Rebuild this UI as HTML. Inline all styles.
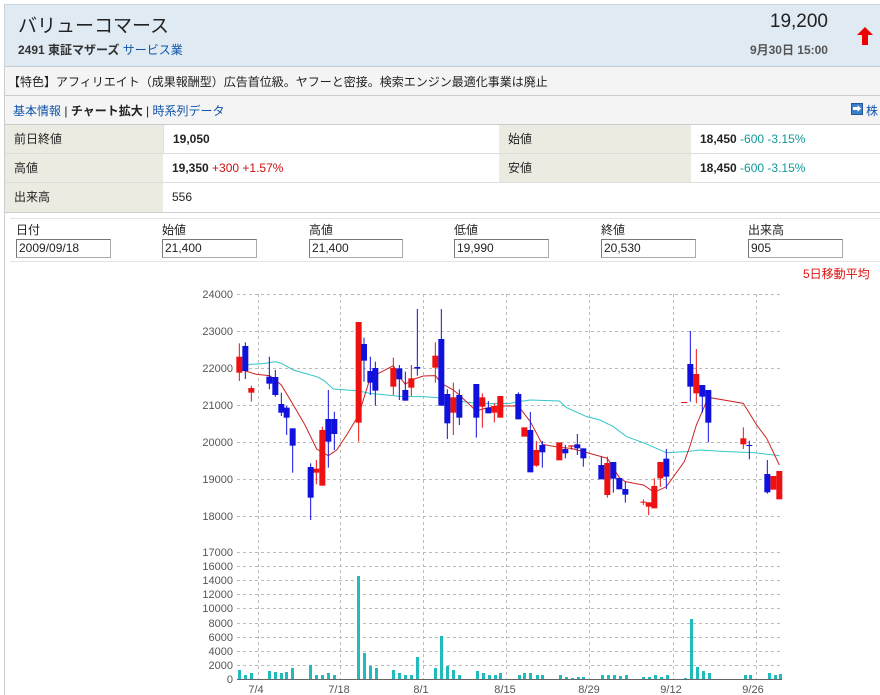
<!DOCTYPE html>
<html><head><meta charset="utf-8">
<style>
*{margin:0;padding:0;box-sizing:border-box}
body{width:880px;height:695px;overflow:hidden;background:#fff;font-family:"Liberation Sans","Noto Sans CJK JP",sans-serif;font-size:12px;color:#222;position:relative}
.a{position:absolute;white-space:nowrap}
.hdr{left:4px;top:4px;width:876px;height:63px;background:#dfeaf3;border-top:1px solid #c9d3da;border-left:1px solid #c9d3da;border-bottom:1px solid #c3ccd2}
.row{left:4px;width:876px;background:#f4f4f4;border-left:1px solid #ccc;border-bottom:1px solid #ccc}
.lbl{background:#ecebe2}
.cell{position:absolute;height:29px;line-height:28px;padding-left:9px;border-bottom:1px solid #ddd;font-size:12px}
.inp{position:absolute;height:19px;border:1px solid #aaa;border-top-color:#777;border-left-color:#777;background:#fff;font-size:12px;line-height:17px;padding-left:2px}
a,.lk{color:#1155aa}
</style></head><body>
<div class="a hdr"></div>
<div class="a" style="left:18px;top:11px;font-size:19px;color:#222">バリューコマース</div>
<div class="a" style="right:52px;top:11px;font-size:19px;color:#222">19,200</div>
<svg class="a" style="left:856px;top:26px" width="18" height="20" viewBox="0 0 18 20"><path d="M9 1 L17 9 L12 9 L12 19 L6 19 L6 9 L1 9Z" fill="#e00"/></svg>
<div class="a" style="left:18px;top:41px;font-size:12px;font-weight:bold;color:#333">2491 東証マザーズ <span class="lk" style="font-weight:normal">サービス業</span></div>
<div class="a" style="right:52px;top:41px;font-size:12px;font-weight:bold;color:#555">9月30日 15:00</div>
<div class="a row" style="top:67px;height:29px"></div>
<div class="a" style="left:8px;top:73px;font-size:12px">【特色】アフィリエイト（成果報酬型）広告首位級。ヤフーと密接。検索エンジン最適化事業は廃止</div>
<div class="a row" style="top:96px;height:29px"></div>
<div class="a" style="left:13px;top:102px;font-size:12px"><span class="lk">基本情報</span> | <b>チャート拡大</b> | <span class="lk">時系列データ</span></div>
<div class="a" style="left:851px;top:103px;width:12px;height:12px;background:#3a7fc9;border:1px solid #25579a;color:#fff;font-size:9px;line-height:10px;text-align:center">➡</div>
<div class="a lk" style="left:866px;top:102px;font-size:12px">株</div>
<div class="a" style="left:4px;top:125px;width:876px;height:88px;border-left:1px solid #ccc;border-bottom:1px solid #ccc">
<div class="cell lbl" style="left:0;top:0;width:158px">前日終値</div>
<div class="cell" style="left:158px;top:0;width:336px;font-weight:bold;border-left:1px solid #ddd">19,050</div>
<div class="cell lbl" style="left:494px;top:0;width:192px">始値</div>
<div class="cell" style="left:686px;top:0;width:190px"><b>18,450</b> <span style="color:#199">-600 -3.15%</span></div>
<div class="cell lbl" style="left:0;top:29px;width:158px">高値</div>
<div class="cell" style="left:158px;top:29px;width:336px"><b>19,350</b> <span style="color:#c11">+300 +1.57%</span></div>
<div class="cell lbl" style="left:494px;top:29px;width:192px">安値</div>
<div class="cell" style="left:686px;top:29px;width:190px"><b>18,450</b> <span style="color:#199">-600 -3.15%</span></div>
<div class="cell lbl" style="left:0;top:58px;width:158px;border-bottom:none">出来高</div>
<div class="cell" style="left:158px;top:58px;width:718px;border-bottom:none">556</div>
</div>
<div class="a" style="left:4px;top:213px;width:1px;height:482px;background:#ccc"></div>
<div class="a" style="left:10px;top:218px;width:870px;height:44px;border-top:1px solid #e4e4e4;border-bottom:1px solid #e4e4e4"></div>
<div class="a" style="left:16px;top:221px">日付</div><div class="a" style="left:162px;top:221px">始値</div><div class="a" style="left:309px;top:221px">高値</div><div class="a" style="left:454px;top:221px">低値</div><div class="a" style="left:601px;top:221px">終値</div><div class="a" style="left:748px;top:221px">出来高</div>
<div class="inp" style="left:16px;top:239px;width:95px">2009/09/18</div>
<div class="inp" style="left:162px;top:239px;width:95px">21,400</div>
<div class="inp" style="left:309px;top:239px;width:94px">21,400</div>
<div class="inp" style="left:454px;top:239px;width:95px">19,990</div>
<div class="inp" style="left:601px;top:239px;width:95px">20,530</div>
<div class="inp" style="left:748px;top:239px;width:95px">905</div>
<div class="a" style="left:803px;top:265px;color:#d11;font-size:12px">5日移動平均</div>
<svg class="a" style="left:0;top:0" width="880" height="695">
<g stroke="#bbb" stroke-width="1" stroke-dasharray="3,3" fill="none">
<path d="M237 294.5H780M237 331.5H780M237 368.5H780M237 405.5H780M237 442.5H780M237 479.5H780M237 516.5H780M237 552.5H780"/>
<path d="M237 566.5H780M237 580.5H780M237 594.5H780M237 608.5H780M237 623.5H780M237 637.5H780M237 651.5H780M237 665.5H780"/>
<path d="M258.5 294V679M340.5 294V679M423.5 294V679M506.5 294V679M589.5 294V679M673.5 294V679M756.5 294V679"/>
</g>
<path d="M237 679.5H782" stroke="#666" stroke-width="1"/>
<g font-family="Liberation Sans,sans-serif" font-size="11" fill="#555" text-anchor="end">
<text x="233" y="298">24000</text><text x="233" y="335">23000</text><text x="233" y="372">22000</text><text x="233" y="409">21000</text><text x="233" y="446">20000</text><text x="233" y="483">19000</text><text x="233" y="520">18000</text><text x="233" y="556">17000</text>
<text x="233" y="570">16000</text><text x="233" y="584">14000</text><text x="233" y="598">12000</text><text x="233" y="612">10000</text><text x="233" y="627">8000</text><text x="233" y="641">6000</text><text x="233" y="655">4000</text><text x="233" y="669">2000</text><text x="233" y="683">0</text>
</g>
<g font-family="Liberation Sans,sans-serif" font-size="11" fill="#555" text-anchor="middle">
<text x="256" y="693">7/4</text><text x="339" y="693">7/18</text><text x="421" y="693">8/1</text><text x="505" y="693">8/15</text><text x="589" y="693">8/29</text><text x="671" y="693">9/12</text><text x="753" y="693">9/26</text>
</g>
<g fill="#22bbbb">
<rect x="238" y="670" width="3" height="9"/><rect x="244" y="675" width="3" height="4"/><rect x="250" y="673" width="3" height="6"/>
<rect x="268" y="671" width="3" height="8"/><rect x="274" y="672" width="3" height="7"/><rect x="280" y="673" width="3" height="6"/><rect x="285" y="672" width="3" height="7"/><rect x="291" y="668" width="3" height="11"/>
<rect x="309" y="665" width="3" height="14"/><rect x="315" y="675" width="3" height="4"/><rect x="321" y="675" width="3" height="4"/><rect x="327" y="673" width="3" height="6"/><rect x="333" y="675" width="3" height="4"/>
<rect x="357" y="576" width="3" height="103"/><rect x="363" y="653" width="3" height="26"/><rect x="369" y="666" width="3" height="13"/><rect x="375" y="668" width="3" height="11"/>
<rect x="392" y="670" width="3" height="9"/><rect x="398" y="673" width="3" height="6"/><rect x="404" y="675" width="3" height="4"/><rect x="410" y="675" width="3" height="4"/><rect x="416" y="657" width="3" height="22"/>
<rect x="434" y="668" width="3" height="11"/><rect x="440" y="636" width="3" height="43"/><rect x="446" y="666" width="3" height="13"/><rect x="452" y="670" width="3" height="9"/><rect x="458" y="675" width="3" height="4"/>
<rect x="476" y="671" width="3" height="8"/><rect x="482" y="673" width="3" height="6"/><rect x="488" y="675" width="3" height="4"/><rect x="494" y="675" width="3" height="4"/><rect x="499" y="673" width="3" height="6"/>
<rect x="518" y="675" width="3" height="4"/><rect x="523" y="673" width="3" height="6"/><rect x="529" y="673" width="3" height="6"/><rect x="536" y="675" width="3" height="4"/><rect x="541" y="675" width="3" height="4"/>
<rect x="559" y="675" width="3" height="4"/><rect x="565" y="677" width="3" height="2"/><rect x="571" y="678" width="3" height="1"/><rect x="577" y="677" width="3" height="2"/><rect x="582" y="677" width="3" height="2"/>
<rect x="601" y="675" width="3" height="4"/><rect x="607" y="675" width="3" height="4"/><rect x="613" y="675" width="3" height="4"/><rect x="619" y="676" width="3" height="3"/><rect x="625" y="675" width="3" height="4"/>
<rect x="642" y="677" width="3" height="2"/><rect x="648" y="677" width="3" height="2"/><rect x="654" y="675" width="3" height="4"/><rect x="660" y="677" width="3" height="2"/><rect x="666" y="675" width="3" height="4"/>
<rect x="684" y="678" width="3" height="1"/><rect x="690" y="619" width="3" height="60"/><rect x="696" y="667" width="3" height="12"/><rect x="702" y="671" width="3" height="8"/><rect x="708" y="673" width="3" height="6"/>
<rect x="744" y="675" width="3" height="4"/><rect x="749" y="675" width="3" height="4"/><rect x="768" y="673" width="3" height="6"/><rect x="774" y="675" width="3" height="4"/><rect x="779" y="674" width="3" height="5"/>
</g>
<g transform="translate(190,285) scale(0.33333)">
<polyline fill="none" stroke="#33c6c6" stroke-width="3" points="148,250 180,238 220,236 256,230 274,235 310,255 345,265 380,275 400,285 430,312 470,315 506,318 540,325 590,330 640,335 700,335 740,338 790,343 820,350 860,355 900,356 960,355 985,350 1021,345 1108,348 1130,368 1190,395 1230,405 1270,425 1310,455 1360,473 1429,503 1490,500 1530,495 1610,500 1690,503 1768,512"/>
<polyline fill="none" stroke="#cc2222" stroke-width="3" points="148,250 166,258 200,268 238,272 256,285 274,300 310,360 345,420 380,492 415,512 440,495 470,450 506,390 540,280 556,270 610,242 628,275 646,298 664,285 700,273 736,272 754,295 790,315 808,330 859,378 877,372 913,365 930,363 985,363 1021,410 1057,478 1108,487 1144,490 1180,500 1234,515 1252,520 1288,578 1306,590 1360,600 1393,622 1429,605 1483,530 1501,480 1519,420 1555,337 1660,355 1700,420 1730,460 1768,540"/>
<g fill="#ee1111">
<rect x="146.5" y="175" width="3" height="113"/><rect x="139" y="215" width="18" height="48"/>
<rect x="182.5" y="302" width="3" height="48"/><rect x="175" y="309" width="18" height="14"/>
<rect x="377.5" y="525" width="3" height="73"/><rect x="370" y="551" width="18" height="12"/>
<rect x="395.5" y="425" width="3" height="177"/><rect x="388" y="435" width="18" height="167"/>
<rect x="504.5" y="111" width="3" height="359"/><rect x="497" y="111" width="18" height="302"/>
<rect x="608.5" y="218" width="3" height="112"/><rect x="601" y="249" width="18" height="56"/>
<rect x="662.5" y="240" width="3" height="93"/><rect x="655" y="280" width="18" height="28"/>
<rect x="734.5" y="172" width="3" height="121"/><rect x="727" y="212" width="18" height="36"/>
<rect x="788.5" y="293" width="3" height="157"/><rect x="781" y="337" width="18" height="46"/>
<rect x="875.5" y="325" width="3" height="103"/><rect x="868" y="337" width="18" height="28"/>
<rect x="911.5" y="355" width="3" height="57"/><rect x="904" y="363" width="18" height="20"/>
<rect x="929.5" y="333" width="3" height="65"/><rect x="922" y="333" width="18" height="65"/>
<rect x="994" y="427" width="18" height="28"/>
<rect x="1037.5" y="468" width="3" height="77"/><rect x="1030" y="495" width="18" height="47"/>
<rect x="1099" y="472" width="18" height="54"/>
<rect x="1142.5" y="482" width="3" height="13"/><rect x="1135" y="481" width="18" height="4"/>
<rect x="1250.5" y="515" width="3" height="123"/><rect x="1243" y="534" width="18" height="96"/>
<rect x="1358.5" y="643" width="3" height="17"/><rect x="1351" y="650" width="18" height="3"/>
<rect x="1374.5" y="652" width="3" height="38"/><rect x="1367" y="652" width="18" height="13"/>
<rect x="1391.5" y="580" width="3" height="90"/><rect x="1384" y="603" width="18" height="67"/>
<rect x="1409.5" y="531" width="3" height="75"/><rect x="1402" y="531" width="18" height="49"/>
<rect x="1474" y="351" width="18" height="3"/>
<rect x="1517.5" y="192" width="3" height="163"/><rect x="1510" y="267" width="18" height="58"/>
<rect x="1658.5" y="427" width="3" height="65"/><rect x="1651" y="460" width="18" height="18"/>
<rect x="1741" y="573" width="18" height="41"/>
<rect x="1759" y="558" width="18" height="85"/>
</g>
<g fill="#1111dd">
<rect x="164.5" y="172" width="3" height="110"/><rect x="157" y="183" width="18" height="75"/>
<rect x="236.5" y="215" width="3" height="98"/><rect x="229" y="275" width="18" height="21"/>
<rect x="254.5" y="255" width="3" height="80"/><rect x="247" y="276" width="18" height="54"/>
<rect x="272.5" y="323" width="3" height="70"/><rect x="265" y="357" width="18" height="26"/>
<rect x="288.5" y="363" width="3" height="87"/><rect x="281" y="368" width="18" height="30"/>
<rect x="306.5" y="430" width="3" height="133"/><rect x="299" y="430" width="18" height="52"/>
<rect x="360.5" y="535" width="3" height="170"/><rect x="353" y="546" width="18" height="92"/>
<rect x="413.5" y="315" width="3" height="233"/><rect x="406" y="402" width="18" height="68"/>
<rect x="431.5" y="380" width="3" height="115"/><rect x="424" y="402" width="18" height="45"/>
<rect x="520.5" y="158" width="3" height="132"/><rect x="513" y="177" width="18" height="50"/>
<rect x="539.5" y="215" width="3" height="115"/><rect x="532" y="258" width="18" height="35"/>
<rect x="554.5" y="230" width="3" height="132"/><rect x="547" y="249" width="18" height="68"/>
<rect x="626.5" y="240" width="3" height="105"/><rect x="619" y="250" width="18" height="33"/>
<rect x="644.5" y="260" width="3" height="87"/><rect x="637" y="315" width="18" height="32"/>
<rect x="680.5" y="72" width="3" height="200"/><rect x="673" y="246" width="18" height="5"/>
<rect x="752.5" y="72" width="3" height="290"/><rect x="745" y="162" width="18" height="200"/>
<rect x="770.5" y="313" width="3" height="149"/><rect x="763" y="327" width="18" height="88"/>
<rect x="806.5" y="313" width="3" height="107"/><rect x="799" y="330" width="18" height="68"/>
<rect x="857.5" y="297" width="3" height="161"/><rect x="850" y="297" width="18" height="101"/>
<rect x="893.5" y="348" width="3" height="37"/><rect x="886" y="368" width="18" height="17"/>
<rect x="983.5" y="322" width="3" height="81"/><rect x="976" y="327" width="18" height="76"/>
<rect x="1019.5" y="381" width="3" height="181"/><rect x="1012" y="435" width="18" height="127"/>
<rect x="1055.5" y="468" width="3" height="80"/><rect x="1048" y="480" width="18" height="22"/>
<rect x="1124.5" y="480" width="3" height="40"/><rect x="1117" y="492" width="18" height="13"/>
<rect x="1160.5" y="447" width="3" height="63"/><rect x="1153" y="478" width="18" height="12"/>
<rect x="1178.5" y="490" width="3" height="55"/><rect x="1171" y="490" width="18" height="30"/>
<rect x="1232.5" y="515" width="3" height="68"/><rect x="1225" y="540" width="18" height="43"/>
<rect x="1268.5" y="531" width="3" height="92"/><rect x="1261" y="531" width="18" height="50"/>
<rect x="1286.5" y="579" width="3" height="34"/><rect x="1279" y="579" width="18" height="34"/>
<rect x="1304.5" y="590" width="3" height="63"/><rect x="1297" y="612" width="18" height="17"/>
<rect x="1427.5" y="492" width="3" height="120"/><rect x="1420" y="521" width="18" height="54"/>
<rect x="1499.5" y="138" width="3" height="212"/><rect x="1492" y="237" width="18" height="68"/>
<rect x="1535.5" y="300" width="3" height="83"/><rect x="1528" y="300" width="18" height="35"/>
<rect x="1553.5" y="315" width="3" height="157"/><rect x="1546" y="315" width="18" height="98"/>
<rect x="1676.5" y="467" width="3" height="56"/><rect x="1669" y="480" width="18" height="3"/>
<rect x="1730.5" y="525" width="3" height="101"/><rect x="1723" y="567" width="18" height="55"/>
</g>
</g>
</svg>
</body></html>
